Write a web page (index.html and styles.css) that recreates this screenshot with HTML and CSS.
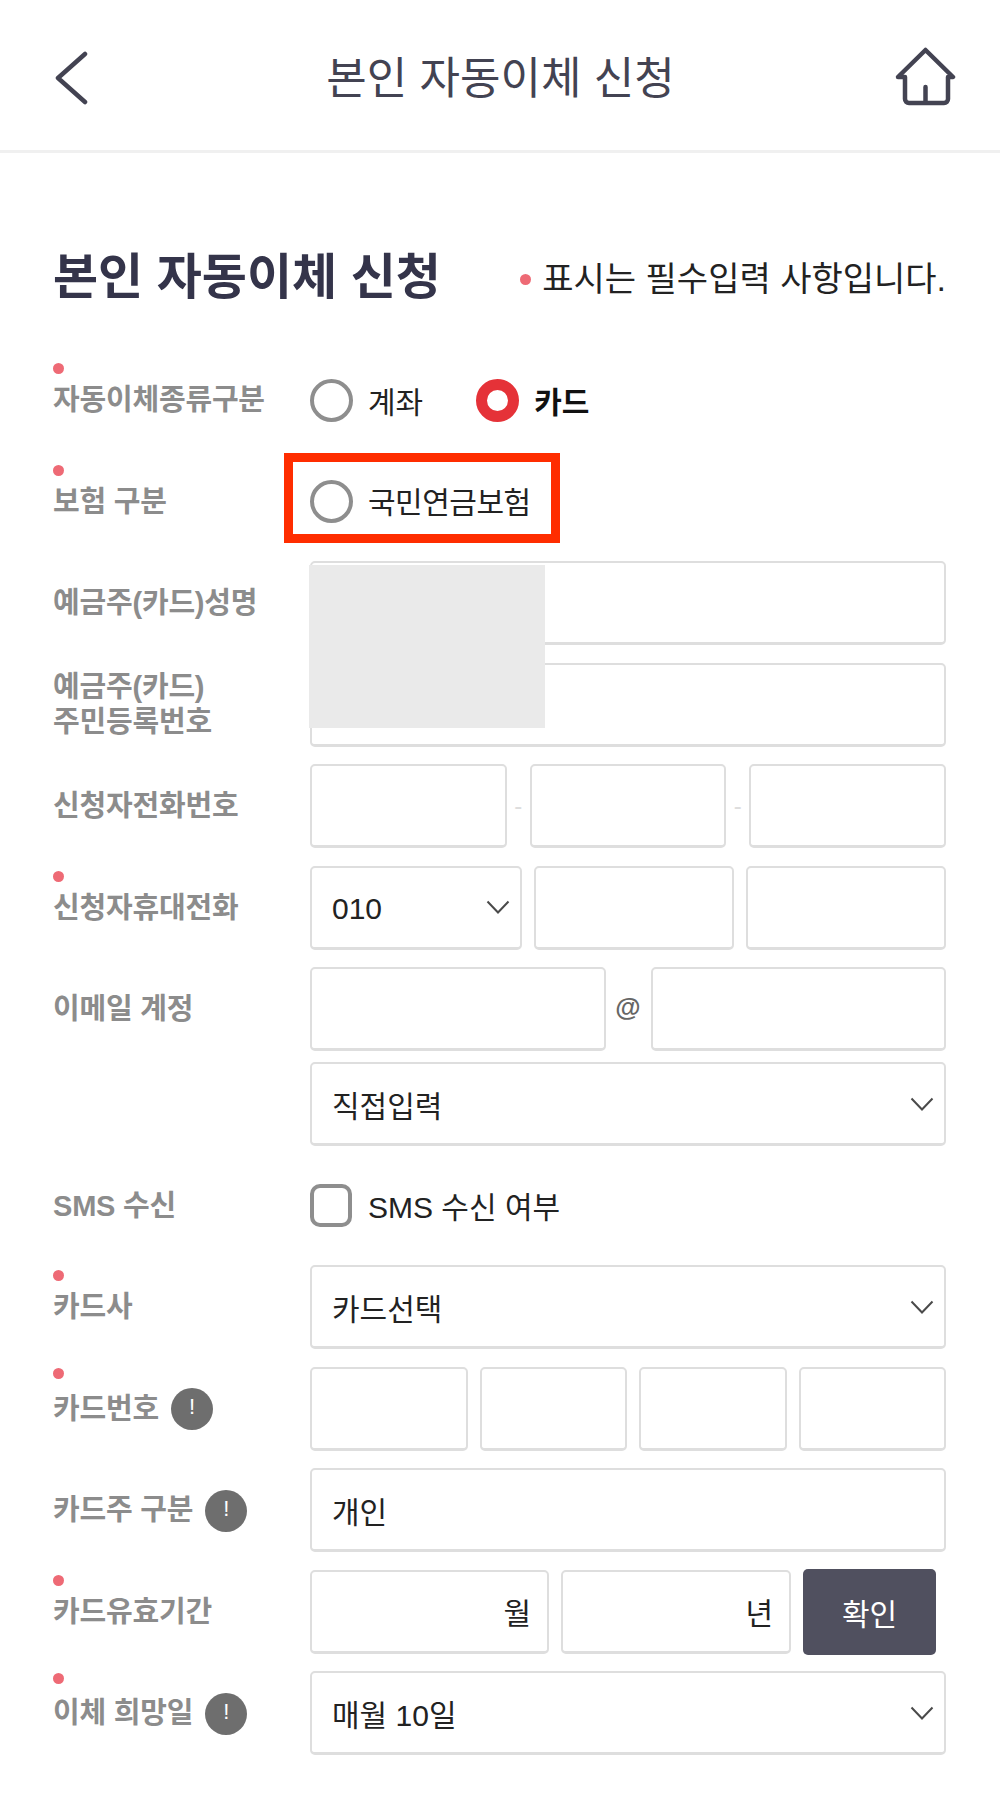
FILE: index.html
```html
<!DOCTYPE html>
<html lang="ko">
<head>
<meta charset="utf-8">
<title>본인 자동이체 신청</title>
<link rel="stylesheet" href="styles.css">
</head>
<body>
<header class="topbar">
  <svg class="back" viewBox="0 0 33 54" aria-hidden="true"><path d="M30 3 3 27l27 24"/></svg>
  <div class="topbar-title">본인 자동이체 신청</div>
  <svg class="home" viewBox="0 0 61 59" aria-hidden="true"><path d="M3 30 30.500 3 58 30H53V52a4 4 0 0 1-4 4H14a4 4 0 0 1-4-4V30ZM30.500 40V56"/></svg>
</header>
<main class="page">
  <div class="title-row">
    <h1 class="title">본인 자동이체 신청</h1>
    <p class="note"><span class="note-dot"></span>표시는 필수입력 사항입니다.</p>
  </div>
  <form class="form">
    <div class="row">
      <div class="label req">자동이체종류구분</div>
      <div class="field">
        <span class="radio"></span><span class="opt">계좌</span>
        <span class="radio on"></span><span class="opt strong">카드</span>
      </div>
    </div>
    <div class="row">
      <div class="label req">보험 구분</div>
      <div class="field">
        <span class="highlight"></span>
        <span class="radio"></span><span class="opt tight">국민연금보험</span>
      </div>
    </div>
    <div class="row">
      <div class="label">예금주(카드)성명</div>
      <div class="field">
        <div class="box grow"></div>
        <div class="redact"></div>
      </div>
    </div>
    <div class="row">
      <div class="label">예금주(카드)<br>주민등록번호</div>
      <div class="field"><div class="box grow"></div></div>
    </div>
    <div class="row">
      <div class="label">신청자전화번호</div>
      <div class="field phone">
        <div class="box grow"></div><span class="dash">-</span><div class="box grow"></div><span class="dash">-</span><div class="box grow"></div>
      </div>
    </div>
    <div class="row">
      <div class="label req">신청자휴대전화</div>
      <div class="field multi">
        <div class="box select w212"><span class="digits">010</span><svg class="chev" viewBox="0 0 24 14" aria-hidden="true"><path d="M1.500 1.500 12 12.500 22.500 1.500"/></svg></div>
        <div class="box grow"></div>
        <div class="box grow"></div>
      </div>
    </div>
    <div class="row-group">
      <div class="row">
        <div class="label">이메일 계정</div>
        <div class="field">
          <div class="box grow"></div><span class="at">@</span><div class="box grow"></div>
        </div>
      </div>
      <div class="row">
        <div class="label"></div>
        <div class="field">
          <div class="box select grow"><span>직접입력</span><svg class="chev" viewBox="0 0 24 14" aria-hidden="true"><path d="M1.500 1.500 12 12.500 22.500 1.500"/></svg></div>
        </div>
      </div>
    </div>
    <div class="row">
      <div class="label">SMS 수신</div>
      <div class="field">
        <span class="check"></span><span class="opt sms">SMS 수신 여부</span>
      </div>
    </div>
    <div class="row">
      <div class="label req">카드사</div>
      <div class="field">
        <div class="box select grow"><span>카드선택</span><svg class="chev" viewBox="0 0 24 14" aria-hidden="true"><path d="M1.500 1.500 12 12.500 22.500 1.500"/></svg></div>
      </div>
    </div>
    <div class="row">
      <div class="label req">카드번호<span class="info">!</span></div>
      <div class="field multi">
        <div class="box w158"></div><div class="box grow"></div><div class="box grow"></div><div class="box grow"></div>
      </div>
    </div>
    <div class="row">
      <div class="label">카드주 구분<span class="info">!</span></div>
      <div class="field"><div class="box grow"><span>개인</span></div></div>
    </div>
    <div class="row">
      <div class="label req">카드유효기간</div>
      <div class="field multi">
        <div class="box unit w239"><span>월</span></div>
        <div class="box unit w230"><span>년</span></div>
        <button class="confirm" type="button">확인</button>
      </div>
    </div>
    <div class="row">
      <div class="label req">이체 희망일<span class="info">!</span></div>
      <div class="field">
        <div class="box select grow"><span>매월 10일</span><svg class="chev" viewBox="0 0 24 14" aria-hidden="true"><path d="M1.500 1.500 12 12.500 22.500 1.500"/></svg></div>
      </div>
    </div>
  </form>
</main>
</body>
</html>
```
FILE: styles.css
```css
* { box-sizing: border-box; }
html, body { margin: 0; padding: 0; background: #fff; }
body {
  width: 1000px;
  height: 1809px;
  overflow: hidden;
  font-family: "Liberation Sans", "Noto Sans CJK KR", sans-serif;
  color: #222;
}
.topbar {
  height: 153px;
  border-bottom: 3px solid #f0f0f0;
  display: flex;
  align-items: center;
  justify-content: space-between;
  padding: 0 44px 0 55px;
}
.back { width: 33px; height: 54px; margin-top: 6px; }
.back path { fill: none; stroke: #434352; stroke-width: 4.500; stroke-linecap: round; stroke-linejoin: round; }
.home { width: 61px; height: 59px; margin-top: 3px; }
.home path { fill: none; stroke: #434352; stroke-width: 4.500; stroke-linecap: round; stroke-linejoin: round; }
.topbar-title {
  font-size: 44px;
  line-height: 56px;
  color: #434352;
  margin: 8px 0 0 18px;
}
.page { padding: 94px 54px 0 53px; }
.title-row {
  display: flex;
  align-items: center;
  justify-content: space-between;
  height: 60px;
  margin-bottom: 51px;
}
.title {
  margin: 0;
  font-size: 49px;
  line-height: 60px;
  font-weight: 700;
  color: #34344a;
}
.note {
  margin: 4px 0 0;
  display: flex;
  align-items: center;
  gap: 11px;
  font-size: 34px;
  line-height: 44px;
  color: #222;
}
.note-dot, .label.req::before {
  display: block;
  width: 11px;
  height: 11px;
  border-radius: 50%;
  background: #ee6a75;
}
.form { display: flex; flex-direction: column; gap: 17.500px; }
.row-group { display: flex; flex-direction: column; gap: 11px; }
.row { display: flex; align-items: center; height: 84px; }
.label {
  position: relative;
  flex: 0 0 257px;
  display: flex;
  align-items: center;
  flex-wrap: wrap;
  margin-bottom: -1px;
  font-size: 29px;
  line-height: 35px;
  font-weight: 700;
  letter-spacing: -0.200px;
  color: #8c8c8c;
}
.label.req::before {
  content: "";
  position: absolute;
  left: 0;
  top: -20px;
}
.field {
  position: relative;
  flex: 1;
  height: 84px;
  display: flex;
  align-items: center;
}
.box {
  height: 84px;
  border: 2px solid #dedede;
  border-bottom-width: 3px;
  border-radius: 5px;
  background: #fff;
  display: flex;
  align-items: center;
  justify-content: space-between;
  padding: 0 10px 0 20px;
  font-size: 30px;
  color: #222;
  min-width: 0;
}
.digits { margin-top: 4px; }
.grow { flex: 1; }
.w158 { flex: 0 0 158px; }
.w212 { flex: 0 0 212px; }
.w239 { flex: 0 0 239px; }
.w230 { flex: 0 0 230px; }
.phone .dash { flex: 0 0 23px; }
.dash { text-align: center; font-size: 24px; color: #ddd; }
.multi { gap: 12px; }
.at {
  flex: 0 0 45px;
  text-align: center;
  font-weight: 700;
  font-size: 26px;
  color: #666;
  margin-bottom: 4px;
}
.chev { width: 24px; height: 14px; flex: none; }
.chev path { fill: none; stroke: #4a4a4a; stroke-width: 2; }
.unit { justify-content: flex-end; padding-right: 16px; }
.confirm {
  flex: 0 0 133px;
  height: 86px;
  border: 0;
  border-radius: 5px;
  background: #50505f;
  color: #fff;
  font: inherit;
  font-size: 30px;
  padding: 0;
}
.radio {
  flex: none;
  width: 43px;
  height: 43px;
  border: 4px solid #8e8e8e;
  border-radius: 50%;
  margin-right: 15px;
}
.radio.on {
  border: 11px solid #e53238;
  margin-left: 53px;
}
.opt { font-size: 30px; color: #222; }
.tight { letter-spacing: -0.500px; margin-bottom: 3px; }
.sms { margin: 0 0 2px 1px; }
.strong { font-weight: 700; color: #111; }
.check {
  flex: none;
  width: 42px;
  height: 43px;
  border: 4px solid #8e8e8e;
  border-radius: 10px;
  margin-right: 15px;
}
.info {
  flex: none;
  width: 42px;
  height: 42px;
  border-radius: 50%;
  background: #6e6e6e;
  color: #fff;
  margin-left: 12px;
  font-size: 22px;
  font-weight: 400;
  line-height: 38px;
  text-align: center;
}
.highlight {
  position: absolute;
  left: -26px;
  top: -7px;
  width: 276px;
  height: 90px;
  border: 9px solid #ff2d00;
}
.redact {
  position: absolute;
  z-index: 1;
  left: -1px;
  top: 4px;
  width: 236px;
  height: 163px;
  background: #eaeaea;
}
```
